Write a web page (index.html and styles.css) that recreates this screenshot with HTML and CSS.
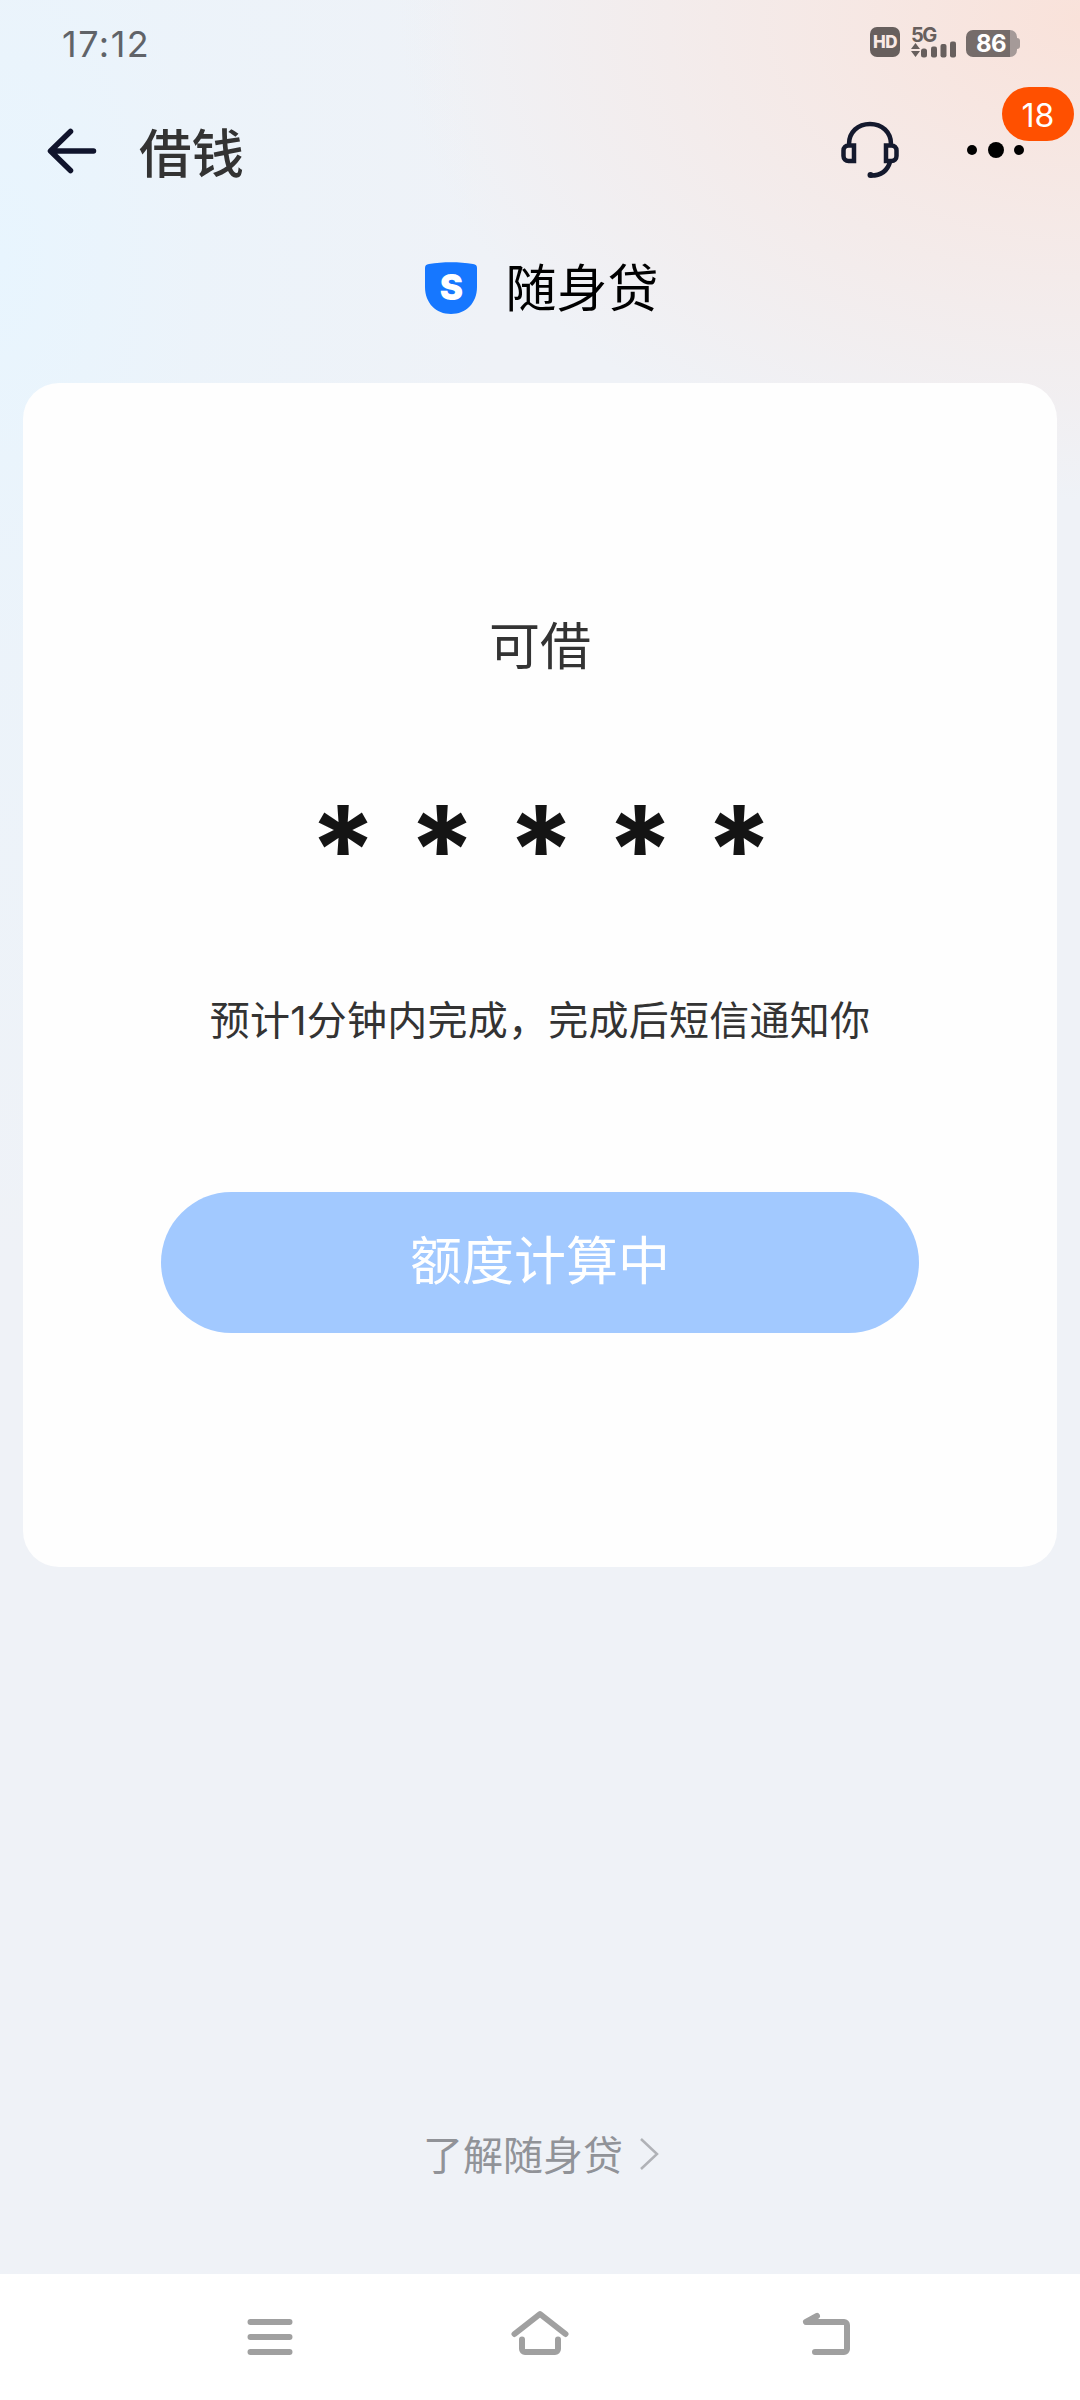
FILE: index.html
```html
<!DOCTYPE html>
<html lang="zh-CN">
<head>
<meta charset="utf-8">
<title>借钱</title>
<link rel="stylesheet" href="styles.css">
</head>
<body>
<div class="screen">
  <header class="status">
    <span class="time">17:12</span>
    <div class="status-icons">
      <span class="hd">HD</span>
      <div class="network">
        <span class="network-type">5G</span>
        <svg class="bars" width="46" height="17" viewBox="0 0 46 17">
          <path d="M4.5 1 9 7H0zM4.5 15 9 9H0z"/>
          <rect x="10" y="6.500" width="6" height="9" rx="2.500"/>
          <rect x="20" y="4.500" width="6" height="11" rx="2"/>
          <rect x="29.500" y="2" width="6" height="13.500" rx="2"/>
          <rect x="39" y="-0.500" width="6" height="16" rx="2"/>
        </svg>
      </div>
      <span class="battery">86</span>
    </div>
  </header>
  <nav class="titlebar">
    <svg class="back" width="52" height="48" viewBox="0 0 52 48"><path d="M24.500 4.500 4.500 24l20 19.500M5 24h42.500"/></svg>
    <h1 class="title">借钱</h1>
    <svg class="headset" width="60" height="60" viewBox="0 0 60 60">
      <path d="M9 24C9 12 18 4 30 4s21 8 21 20M14 25.500H8.500a5 5 0 0 0-5 5V36a5 5 0 0 0 5 5H14zM46 25.500h5.500a5 5 0 0 1 5 5V36a5 5 0 0 1-5 5H46zM50 42c-2.500 8.500-9 13.500-19 13.500"/>
      <circle cx="30.500" cy="55" r="3"/>
    </svg>
    <div class="more">
      <i class="dot"></i><i class="dot dot-large"></i><i class="dot"></i>
      <span class="badge">18</span>
    </div>
  </nav>
  <div class="brand">
    <div class="shield">
      <svg width="52" height="52" viewBox="0 0 52 52"><path d="M0 6C0 3.500 1 2.500 4 2c14-2.500 30-2.500 44 0 3 .5 4 1.500 4 4v19C52 41 41 52 26 52S0 41 0 25z"/></svg>
      <b class="shield-letter">S</b>
    </div>
    <span class="brand-name">随身贷</span>
  </div>
  <main class="card">
    <h2 class="label">可借</h2>
    <div class="amount"><span>*</span><span>*</span><span>*</span><span>*</span><span>*</span></div>
    <p class="hint">预计<span class="numeral">1</span>分钟内完成，完成后短信通知你</p>
    <button class="action" type="button">额度计算中</button>
  </main>
  <a class="learn">了解随身贷<svg width="20" height="34" viewBox="0 0 20 34"><path d="M2 2l16 15L2 32"/></svg></a>
  <footer class="navbar">
    <svg width="60" height="60" viewBox="0 0 60 60"><path d="M10.500 17h39M10.500 32h39M10.500 47h39"/></svg>
    <svg width="60" height="60" viewBox="0 0 60 60"><path d="M4.500 29 30 9 55.500 29M12 34.500V44a3 3 0 0 0 3 3h30a3 3 0 0 0 3-3v-9.500"/></svg>
    <svg class="nav-back" width="60" height="60" viewBox="0 0 60 60"><path d="M17 11 6 17h38a3 3 0 0 1 3 3v24a3 3 0 0 1-3 3H15"/></svg>
  </footer>
</div>
</body>
</html>
```
FILE: styles.css
```css
* { box-sizing: border-box; }

body {
  margin: 0;
  font-family: "Noto Sans CJK SC", sans-serif;
  color: #333;
}

.screen {
  width: 1080px;
  height: 2400px;
  display: flex;
  flex-direction: column;
  background:
    radial-gradient(ellipse 680px 480px at 1080px 20px, #f9e2da 0%, rgba(248, 229, 223, 0.7) 40%, rgba(244, 237, 238, 0) 100%),
    radial-gradient(ellipse 500px 1000px at 0 260px, #e8f5fe 0%, rgba(234, 244, 252, 0.6) 40%, rgba(238, 242, 247, 0) 100%),
    #eff2f7;
}

.status {
  height: 87px;
  display: flex;
  justify-content: space-between;
  align-items: flex-start;
  padding: 27px 60px 0 62px;
}

.time {
  font: 400 36px/34px Inter, sans-serif;
  letter-spacing: 1.5px;
  color: #606368;
}

.status-icons { display: flex; }

.hd {
  width: 30px;
  height: 30px;
  margin-right: 11px;
  border-radius: 7px;
  background: #675f5d;
  color: #f9e9e4;
  font: 800 17px/31px Inter, sans-serif;
  letter-spacing: -0.5px;
  text-align: center;
}

.network {
  width: 46px;
  height: 31px;
  margin-right: 9px;
  display: flex;
  flex-direction: column;
}

.network-type {
  height: 15px;
  font: 700 20px/16px Inter, sans-serif;
  letter-spacing: -1.5px;
  color: #675f5d;
}

.bars { fill: #675f5d; overflow: visible; }

.battery {
  position: relative;
  width: 51px;
  height: 27px;
  margin: 3px 3px 0 0;
  padding-right: 1px;
  border-radius: 7px;
  background: linear-gradient(90deg, #756c6a 44px, #a59a98 44px);
  color: #fff;
  font: 700 24px/28px Inter, sans-serif;
  letter-spacing: -0.5px;
  text-align: center;
}

.battery::after {
  content: "";
  position: absolute;
  left: 51px;
  top: 8px;
  width: 3px;
  height: 11px;
  border-radius: 0 3px 3px 0;
  background: #a59a98;
}

.titlebar {
  height: 125px;
  display: flex;
  align-items: center;
  padding: 0 56px 0 46px;
}

.back {
  margin-top: 3px;
  fill: none;
  stroke: #10142c;
  stroke-width: 5.5;
  stroke-linecap: round;
  stroke-linejoin: round;
  margin-right: 41px;
}

.title {
  margin: 0;
  font-size: 52.5px;
  line-height: 60px;
  font-weight: 500;
}

.headset {
  margin-left: auto;
  margin-right: 67px;
  fill: none;
  stroke: #14192d;
  stroke-width: 4.5;
}

.headset circle { fill: #14192d; stroke: none; }

.more {
  position: relative;
  width: 57px;
  display: flex;
  justify-content: space-between;
  align-items: center;
}

.dot {
  width: 10px;
  height: 10px;
  border-radius: 50%;
  background: #000;
}

.dot-large { width: 16px; height: 16px; }

.badge {
  position: absolute;
  left: 35px;
  top: -55px;
  width: 72px;
  height: 54px;
  border-radius: 27px;
  background: #ff5000;
  color: #fff;
  font: 400 32px/57px Inter, sans-serif;
  text-align: center;
}

.brand {
  height: 171px;
  display: flex;
  justify-content: center;
  align-items: flex-start;
  padding: 50px 0 0 4px;
}

.shield {
  position: relative;
  width: 52px;
  height: 52px;
  margin-right: 28px;
  fill: #1677ff;
}

.shield-letter {
  position: absolute;
  inset: 0;
  font: 900 35px/51px Inter, sans-serif;
  color: #fff;
  text-align: center;
}

.brand-name {
  font-size: 51px;
  line-height: 46px;
  color: #000;
}

.card {
  height: 1184px;
  margin: 0 23px;
  display: flex;
  flex-direction: column;
  align-items: center;
  padding-top: 230px;
  border-radius: 36px;
  background: #fefefe;
}

.label {
  margin: 0;
  font-size: 51px;
  line-height: 60px;
  font-weight: 400;
}

.amount {
  width: 495px;
  height: 100px;
  margin: 107px 0 0 2px;
  display: grid;
  grid-template-columns: repeat(5, 99px);
  text-align: center;
  font: 750 122px/140px Inter, sans-serif;
  color: #141414;
}

.amount span {
  display: flex;
  justify-content: center;
}

.hint {
  height: 60px;
  margin: 108px 0 0;
  font-size: 40px;
  line-height: 60px;
  letter-spacing: 0.25px;
}

.numeral {
  font-family: Inter, sans-serif;
  line-height: 1;
}

.action {
  width: 758px;
  height: 141px;
  margin-top: 144px;
  padding: 0 0 10px;
  border: 0;
  border-radius: 71px;
  background: #a2c9ff;
  color: #fff;
  font: 400 52px/60px "Noto Sans CJK SC", sans-serif;
}

.learn {
  display: flex;
  justify-content: center;
  align-items: center;
  gap: 16px;
  margin-top: 556px;
  padding-left: 2px;
  font-size: 40px;
  line-height: 60px;
  color: #919398;
}

.learn svg {
  margin-top: 2px;
  fill: none;
  stroke: #b0b2b7;
  stroke-width: 2.5;
}

.navbar {
  height: 126px;
  margin-top: auto;
  display: flex;
  justify-content: center;
  gap: 210px;
  padding: 31px 0 0 20px;
  background: #fff;
}

.navbar svg {
  fill: none;
  stroke: #a0a0a0;
  stroke-width: 6;
  stroke-linecap: round;
  stroke-linejoin: round;
}

.navbar .nav-back { margin-left: 20px; }
```
